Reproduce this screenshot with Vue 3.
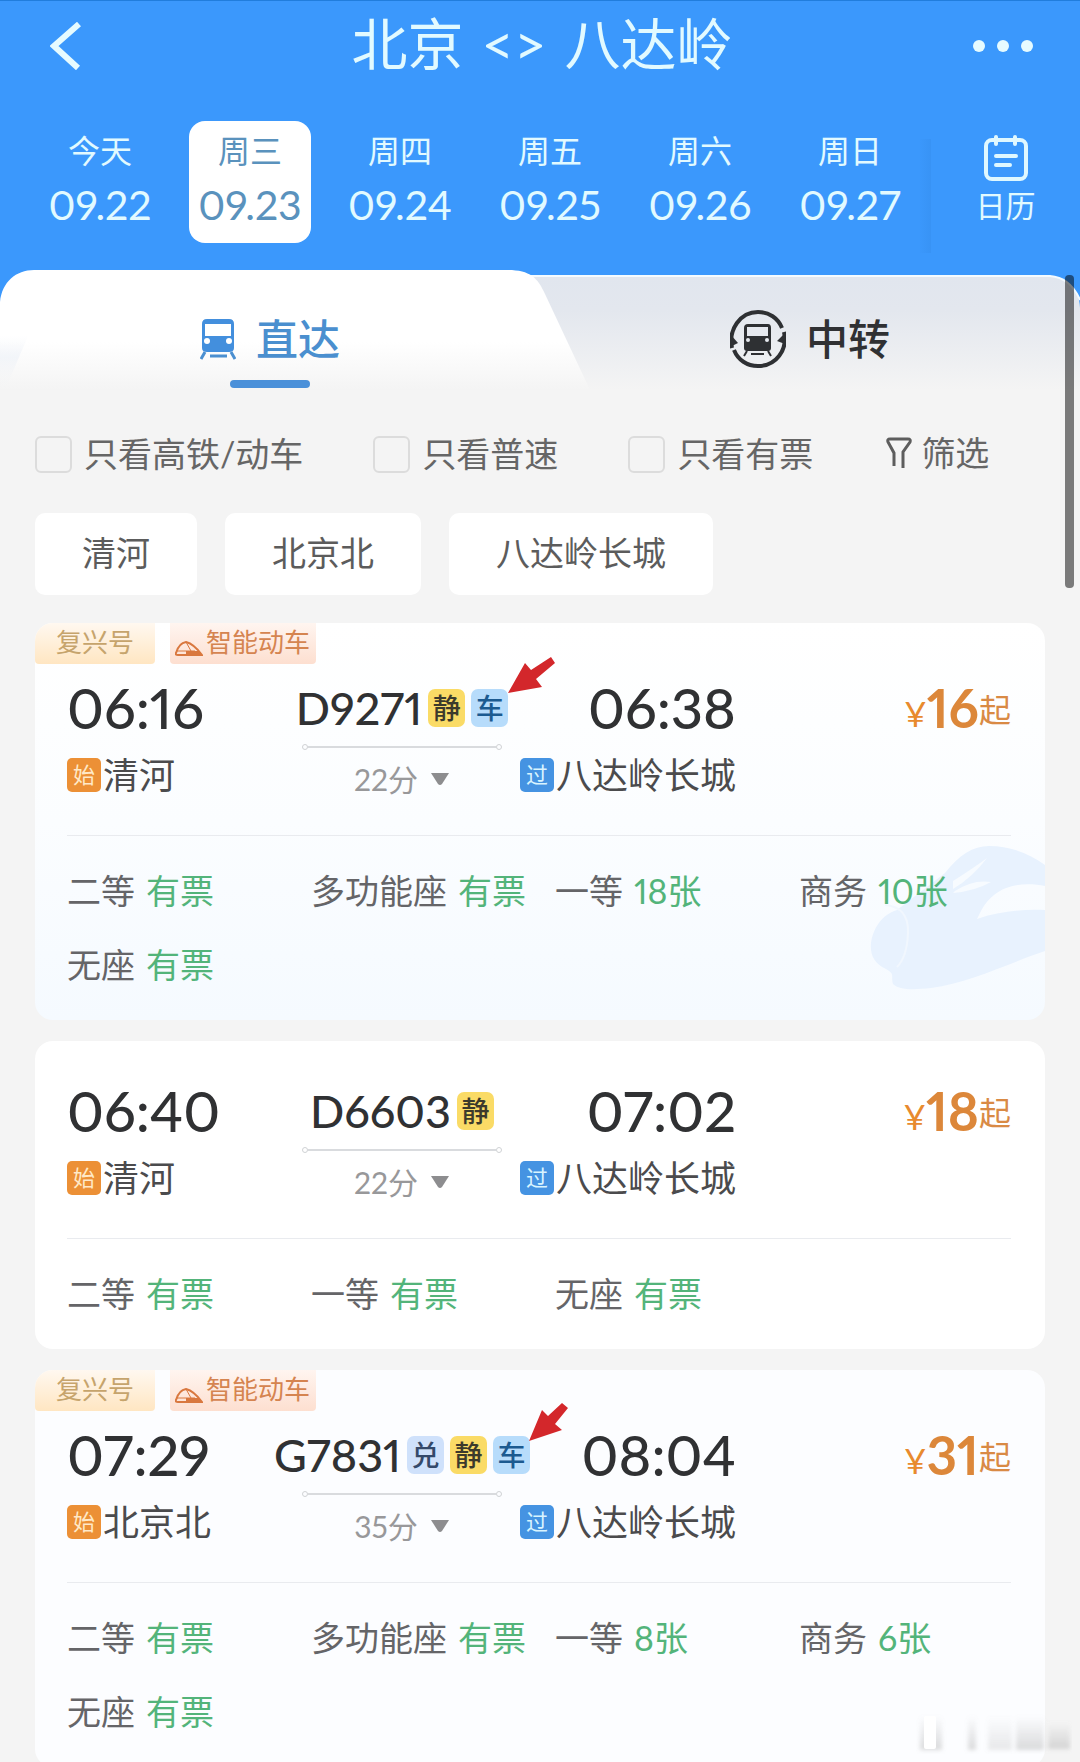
<script setup>
import { ref } from 'vue'

const days = [
  { label: '今天', date: '09.22' },
  { label: '周三', date: '09.23' },
  { label: '周四', date: '09.24' },
  { label: '周五', date: '09.25' },
  { label: '周六', date: '09.26' },
  { label: '周日', date: '09.27' },
]
const selectedDay = ref('09.23')

const filters = ['只看高铁/动车', '只看普速', '只看有票']
const stations = ['清河', '北京北', '八达岭长城']

const trains = [
  {
    no: 'D9271', smart: true, tint: 'sky', badges: ['静', '车'], arrow: 'low',
    depart: '06:16', from: '清河', arrive: '06:38', to: '八达岭长城', duration: '22分', price: '16',
    seats: [['二等', '有票'], ['多功能座', '有票'], ['一等', '18张'], ['商务', '10张'], ['无座', '有票']],
  },
  {
    no: 'D6603', smart: false, tint: 'plain', badges: ['静'], arrow: '',
    depart: '06:40', from: '清河', arrive: '07:02', to: '八达岭长城', duration: '22分', price: '18',
    seats: [['二等', '有票'], ['一等', '有票'], ['无座', '有票']],
  },
  {
    no: 'G7831', smart: true, tint: 'pale', badges: ['兑', '静', '车'], arrow: 'steep',
    depart: '07:29', from: '北京北', arrive: '08:04', to: '八达岭长城', duration: '35分', price: '31',
    seats: [['二等', '有票'], ['多功能座', '有票'], ['一等', '8张'], ['商务', '6张'], ['无座', '有票']],
  },
]
const badgeClass = { 静: 'quiet', 车: 'carriage', 兑: 'redeem' }
</script>

<template>
  <div class="app">
    <header class="top">
      <div class="bar">
        <button class="icon-btn" aria-label="返回">
          <svg width="32" height="48" viewBox="0 0 32 48"><path d="M29 2 4 24 28 46" fill="none" stroke="#e6fbff" stroke-width="6" /></svg>
        </button>
        <h1><span>北京</span><span>&lt;&gt;</span><span>八达岭</span></h1>
        <button class="icon-btn" aria-label="更多">
          <svg width="62" height="14" viewBox="0 0 62 14" fill="#e6fbff"><circle cx="7" cy="7" r="6" /><circle cx="31" cy="7" r="6" /><circle cx="55" cy="7" r="6" /></svg>
        </button>
      </div>
      <nav class="days">
        <div class="day-list">
          <button v-for="d in days" :key="d.date" class="day" :class="{ on: d.date === selectedDay }" @click="selectedDay = d.date">
            <span class="day-name">{{ d.label }}</span>
            <span class="day-date">{{ d.date }}</span>
          </button>
        </div>
        <button class="calendar">
          <svg width="44" height="46" viewBox="0 0 44 46" fill="none" stroke="#dff8ff" stroke-width="4" stroke-linecap="round">
            <rect x="2" y="5" width="40" height="39" rx="6" />
            <path d="M12 2v7M31 2v7" />
            <path d="M12 21h20M12 30h14" />
          </svg>
          <span>日历</span>
        </button>
      </nav>
    </header>

    <main class="sheet">
      <div class="tabs">
        <svg class="tab-bg" viewBox="0 0 1080 120" preserveAspectRatio="none" aria-hidden="true">
          <defs>
            <linearGradient id="tabOn" x1="0" y1="0" x2="0" y2="1"><stop offset="0.6" stop-color="#fff" /><stop offset="1" stop-color="#f4f4f4" /></linearGradient>
            <linearGradient id="tabOff" x1="0" y1="0" x2="0" y2="1"><stop offset="0" stop-color="#e1e6ee" /><stop offset="0.3" stop-color="#e3e7ee" /><stop offset="1" stop-color="#f4f4f4" /></linearGradient>
            <linearGradient id="tabEdge" x1="0" y1="0" x2="0" y2="1"><stop offset="0" stop-color="#eef2f8" stop-opacity="0" /><stop offset="0.4" stop-color="#eef2f8" stop-opacity="0.7" /><stop offset="1" stop-color="#f4f4f4" stop-opacity="0" /></linearGradient>
          </defs>
          <path d="M0 120V32H500V6H1050C1064 7 1080 18 1080 38V120Z" fill="url(#tabOff)" />
          <path d="M500 6H1050C1064 7 1074 16 1080 30" fill="none" stroke="#f4fbff" stroke-width="2" />
          <path d="M0 120V32C2 12 16 0 34 0H508C530 0 538 8 545 24L590 120Z" fill="url(#tabOn)" />
          <path d="M0 66H28L5 120H0Z" fill="url(#tabEdge)" />
        </svg>
        <button class="tab on">
          <svg width="36" height="42" viewBox="0 0 36 42" aria-hidden="true">
            <path d="M7 1h22q5 0 5 5v24q0 4-5 4H7q-5 0-5-4V6q0-5 5-5Z" fill="#438fdd" />
            <path d="M5 6h26v12H5Z" fill="#fff" />
            <circle cx="7" cy="23" r="3" fill="#fff" /><circle cx="29" cy="23" r="3" fill="#fff" />
            <path d="M5 34 1 41M31 34l4 7M10 38h17" stroke="#4b8fd0" stroke-width="3" fill="none" />
          </svg>
          <span>直达</span>
        </button>
        <button class="tab">
          <svg width="56" height="58" viewBox="0 0 56 58" aria-hidden="true">
            <path d="M2 38C-2 20 10 2 28 2c11 0 20 6 24 16" fill="none" stroke="#2e3033" stroke-width="4" />
            <path d="M54 22c4 18-8 34-26 34C17 56 8 50 4 40" fill="none" stroke="#2e3033" stroke-width="4" />
            <path d="M0 37l1-12 7 8ZM56 22l-1 12-8-3Z" fill="#2e3033" />
            <path d="M18 14h20q3 0 3 4v20q0 3-3 3H17q-3 0-3-3V18q0-4 4-4Z" fill="#2e3033" />
            <path d="M17 17h21v9H17Z" fill="#e6e9ef" />
            <circle cx="18" cy="30" r="2" fill="#e6e9ef" /><circle cx="37" cy="30" r="2" fill="#e6e9ef" />
            <path d="M17 41l-3 5M38 41l3 5M21 44h13" stroke="#2e3033" stroke-width="2" />
          </svg>
          <span>中转</span>
        </button>
      </div>

      <div class="filters">
        <label v-for="f in filters" :key="f"><input type="checkbox" />{{ f }}</label>
        <button class="more">
          <svg width="26" height="32" viewBox="0 0 26 32" fill="none" stroke="#5d5d5d" stroke-width="3" aria-hidden="true"><path d="M8 29V16L2 5q-1-3 2-3h18q3 0 2 3l-7 10v16" /></svg>
          筛选
        </button>
      </div>

      <div class="chips">
        <button v-for="s in stations" :key="s">{{ s }}</button>
      </div>

      <article v-for="t in trains" :key="t.no" class="card" :class="[t.tint, { smart: t.smart }]">
        <svg v-if="t.tint === 'sky'" class="train-art" width="176" height="145" viewBox="0 0 176 145" aria-hidden="true">
          <path d="M2 98C4 84 12 70 28 65L76 28C90 10 104 1 120 1C140 1 160 8 176 20V41C160 38 140 38 125 50C115 58 112 66 108 74C130 66 155 64 176 65V106C140 118 100 138 62 143C44 145 30 145 24 139C22 130 26 129 17 124C5 118 1 110 2 98Z" fill="#e8f2fe" />
          <path d="M84 36Q106 22 118 13Q104 32 84 44ZM86 46Q104 34 122 37Q106 46 84 48Z" fill="#f7fbff" />
          <path d="M16 60Q40 62 39 88Q38 112 28 122" fill="none" stroke="#f1f7fe" stroke-width="2" />
        </svg>
        <div v-if="t.smart" class="tags">
          <span class="tag gold">复兴号</span>
          <span class="tag coral">
            <svg width="28" height="16" viewBox="0 0 28 16" fill="none" stroke="#d9783f" aria-hidden="true">
              <path d="M1 12Q4 2 11 1Q19 3 27 14H3Q0 14 1 12Z" stroke-width="2" />
              <path d="M1 10h19M11 1l5 9" stroke-width="1" /><path d="M11 10h13l3 4H11Z" fill="#d9783f" stroke="none" />
            </svg>
            智能动车
          </span>
        </div>
        <div class="trip">
          <div class="stop">
            <div class="time">{{ t.depart }}</div>
            <div class="station"><span class="mark start">始</span>{{ t.from }}</div>
          </div>
          <div class="middle">
            <div class="number">
              <span>{{ t.no }}</span>
              <span v-for="b in t.badges" :key="b" class="badge" :class="badgeClass[b]">
                {{ b }}
                <svg v-if="b === '车' && t.arrow === 'low'" class="arrow" width="50" height="40" viewBox="0 0 50 40" aria-hidden="true">
                  <path d="M1 38 18 8l6 7L44 2l4 6-19 16 6 8Z" fill="#d3272b" />
                </svg>
                <svg v-else-if="b === '车' && t.arrow === 'steep'" class="arrow" width="50" height="40" viewBox="0 0 50 40" aria-hidden="true">
                  <path d="M0 39 13 8l6 6L33 1l6 5-13 16 7 6Z" fill="#d3272b" />
                </svg>
              </span>
            </div>
            <div class="track"></div>
            <button class="duration">{{ t.duration }}
              <svg width="20" height="14" viewBox="0 0 20 14" aria-hidden="true"><path d="M1 1h18l-7 11q-2 2-4 0Z" fill="#8d8d8f" /></svg>
            </button>
          </div>
          <div class="stop end">
            <div class="time">{{ t.arrive }}</div>
            <div class="station"><span class="mark pass">过</span>{{ t.to }}</div>
          </div>
          <div class="price"><span class="yen">¥</span><strong>{{ t.price }}</strong><span class="from">起</span></div>
        </div>
        <ul class="seats">
          <li v-for="s in t.seats" :key="s[0]">{{ s[0] }}<span>{{ s[1] }}</span></li>
        </ul>
      </article>

      <div class="thumb" aria-hidden="true"></div>
    </main>

    <svg class="ghost" width="156" height="42" viewBox="0 0 156 42" aria-hidden="true">
      <defs>
        <filter id="soft"><feGaussianBlur stdDeviation="2" /></filter>
        <linearGradient id="fade" x1="0" y1="0" x2="0" y2="1"><stop offset="0" stop-color="#999" stop-opacity="0" /><stop offset="1" stop-color="#999" stop-opacity="0.35" /></linearGradient>
      </defs>
      <g filter="url(#soft)" fill="url(#fade)">
        <rect x="4" y="4" width="22" height="34" />
        <rect x="52" y="4" width="8" height="34" /><rect x="72" y="4" width="24" height="34" opacity="0.6" />
        <rect x="100" y="4" width="28" height="34" /><rect x="132" y="10" width="22" height="27" />
      </g>
      <rect x="8" y="4" width="12" height="33" rx="2" fill="#fff" />
    </svg>
  </div>
</template>

<style>
body {
  margin: 0;
  background: #f4f4f4;
}
</style>

<style scoped>
.app {
  position: relative;
  height: 100vh;
  overflow: hidden;
  background: #f4f4f4;
  font-family: Lato, "Noto Sans CJK SC", sans-serif;
  font-variant-numeric: proportional-nums;
  color: #303133;
}
button {
  margin: 0;
  padding: 0;
  border: 0;
  background: none;
  font: inherit;
  color: inherit;
  white-space: nowrap;
}
svg {
  display: block;
  flex: none;
}

/* header */
.top {
  box-sizing: border-box;
  padding-bottom: 67px;
  border-top: 1px solid #217ddc;
  background: #3b98fc;
  color: #e2faff;
}
.bar {
  display: flex;
  align-items: center;
  justify-content: space-between;
  height: 89px;
  padding: 0 46px 0 50px;
}
.icon-btn {
  display: flex;
  width: 62px;
}
h1 {
  display: flex;
  gap: 18px;
  margin: 0;
  padding-bottom: 4px;
  font-size: 56px;
  line-height: 80px;
  font-weight: 400;
}
.days {
  display: flex;
  margin-top: 31px;
  padding-left: 25px;
}
.day-list {
  flex: 900;
  display: grid;
  grid-template-columns: repeat(6, 1fr);
  justify-items: center;
}
.day {
  display: flex;
  flex-direction: column;
  align-items: center;
  gap: 10px;
  width: 122px;
  padding: 11px 0 13px;
  border-radius: 16px;
}
.day.on {
  background: #fff;
  color: #5a92bd;
}
.day-name {
  font-size: 32px;
  line-height: 38px;
}
.day-date {
  font-size: 41px;
  line-height: 50px;
}
.calendar {
  position: relative;
  flex: 149;
  display: flex;
  flex-direction: column;
  align-items: center;
  gap: 4px;
  padding: 14px 0 0 6px;
  font-size: 30px;
  line-height: 40px;
}
.calendar::before {
  content: "";
  position: absolute;
  left: -6px;
  top: 18px;
  width: 12px;
  height: 114px;
  background: linear-gradient(90deg, #3b98fc, #3893f5);
}

/* tabs */
.sheet {
  position: relative;
  margin-top: -40px;
}
.tabs {
  position: relative;
  display: grid;
  grid-template-columns: 1fr 1fr;
  height: 120px;
}
.tab-bg {
  position: absolute;
  inset: 0;
  width: 100%;
  height: 100%;
}
.tab {
  position: relative;
  display: flex;
  align-items: center;
  justify-content: center;
  gap: 20px;
  height: 138px;
  font-size: 42px;
  font-weight: 500;
}
.tab span {
  padding-bottom: 6px;
}
.tab.on {
  color: #4a8fcf;
}
.tab.on::after {
  content: "";
  position: absolute;
  left: 50%;
  top: 110px;
  width: 80px;
  height: 8px;
  margin-left: -40px;
  border-radius: 4px;
  background: #4a90d9;
}

/* filters */
.filters {
  display: flex;
  align-items: center;
  gap: 70px;
  margin-top: 43px;
  padding: 0 35px;
  font-size: 34px;
  line-height: 40px;
  color: #666;
  white-space: nowrap;
}
.filters label,
.more {
  display: flex;
  align-items: center;
  gap: 12px;
}
.more {
  gap: 9px;
  padding: 0 0 2px 3px;
}
.filters input {
  appearance: none;
  box-sizing: border-box;
  width: 37px;
  height: 37px;
  margin: 0;
  border: 2px solid #dcdcdc;
  border-radius: 6px;
}
.chips {
  display: flex;
  gap: 28px;
  margin: 38px 35px 28px;
}
.chips button {
  height: 82px;
  padding: 0 47px 6px;
  border-radius: 10px;
  background: #fff;
  font-size: 34px;
  color: #5c5c5c;
}

/* cards */
.card {
  position: relative;
  margin: 0 35px 21px;
  border-radius: 18px;
  background: #fff;
  overflow: hidden;
}
.card.sky {
  background: linear-gradient(#fff, #fbfdff 50%, #f5faff);
}
.card.pale {
  background: #fcfdff;
}
.train-art {
  position: absolute;
  right: 0;
  bottom: 30px;
}
.tags {
  display: flex;
  gap: 15px;
}
.tag {
  box-sizing: border-box;
  display: flex;
  align-items: center;
  gap: 3px;
  height: 41px;
  padding: 0 6px 3px 5px;
  font-size: 26px;
  line-height: 38px;
  border-radius: 0 0 4px 4px;
}
.tag svg {
  margin-top: 14px;
}
.gold {
  padding: 0 21px 3px;
  background: linear-gradient(#fff8f0, #ffe6c2);
  color: #c6a46c;
}
.coral {
  background: linear-gradient(#fff5f0, #fddfd0);
  color: #d58450;
}
.trip {
  position: relative;
  display: grid;
  grid-template-columns: 220fr 230fr 219fr 275fr;
  margin: 0 34px 0 32px;
  padding: 40px 0 36px;
  border-bottom: 1px solid #e9ebef;
  white-space: nowrap;
}
.trip > * {
  min-width: 0;
}
.smart .trip {
  padding-top: 14px;
}
.time {
  font-size: 56px;
  line-height: 60px;
  font-weight: 500;
}
.station {
  display: flex;
  align-items: center;
  gap: 2px;
  margin-top: 14px;
  font-size: 36px;
  line-height: 46px;
  color: #4b4b4d;
}
.end {
  display: flex;
  flex-direction: column;
  align-items: flex-end;
}
.mark {
  width: 34px;
  height: 34px;
  border-radius: 5px;
  font-size: 22px;
  line-height: 34px;
  text-align: center;
  color: #fff;
}
.start {
  background: #ec9036;
  color: #ffe9c8;
}
.pass {
  background: #4593e2;
  color: #d8f4ff;
}
.middle {
  display: flex;
  flex-direction: column;
  align-items: center;
}
.number {
  display: flex;
  align-items: center;
  gap: 6px;
  height: 60px;
  font-size: 45px;
  font-weight: 500;
}
.badge {
  position: relative;
  width: 37px;
  height: 38px;
  border-radius: 7px;
  font-size: 28px;
  line-height: 38px;
  text-align: center;
}
.quiet {
  background: #fadb66;
  color: #3c3a2c;
}
.carriage {
  background: #b7dcfb;
  color: #1c5a90;
}
.redeem {
  background: #cfe1fb;
  color: #34496a;
}
.arrow {
  position: absolute;
  left: 36px;
  top: -34px;
  z-index: 1;
}
.track {
  position: relative;
  box-sizing: border-box;
  width: 200px;
  height: 6px;
  margin: 6px 0 9px;
  background: linear-gradient(#d9dbde, #d9dbde) center / 188px 2px no-repeat;
}
.track::before,
.track::after {
  content: "";
  position: absolute;
  left: 0;
  top: 0;
  box-sizing: border-box;
  width: 6px;
  height: 6px;
  border: 1px solid #d0d2d5;
  border-radius: 50%;
}
.track::after {
  left: auto;
  right: 0;
}
.duration {
  display: flex;
  align-items: center;
  gap: 12px;
  font-size: 30px;
  line-height: 40px;
  color: #98989a;
}
.price {
  display: flex;
  justify-content: flex-end;
  align-items: flex-end;
  height: 60px;
  font-size: 32px;
  line-height: 48px;
  color: #d98a45;
}
.price .yen {
  font-size: 34px;
  color: #e88a2e;
}
.price .from {
  padding-bottom: 4px;
}
.price strong {
  font-size: 53px;
  line-height: 60px;
  font-weight: 700;
  color: #dc873a;
}
.seats {
  position: relative;
  display: grid;
  grid-template-columns: repeat(4, 244fr);
  margin: 0 2px 0 32px;
  padding: 18px 0;
  list-style: none;
  font-size: 34px;
  line-height: 74px;
  color: #656568;
  white-space: nowrap;
}
.seats span {
  margin-left: 11px;
  color: #53b47a;
}

.thumb {
  position: absolute;
  top: 5px;
  right: 6px;
  width: 9px;
  height: 313px;
  border-radius: 4px;
  background: rgba(0, 0, 0, 0.5);
}
.ghost {
  position: absolute;
  right: 8px;
  bottom: 8px;
}
</style>
